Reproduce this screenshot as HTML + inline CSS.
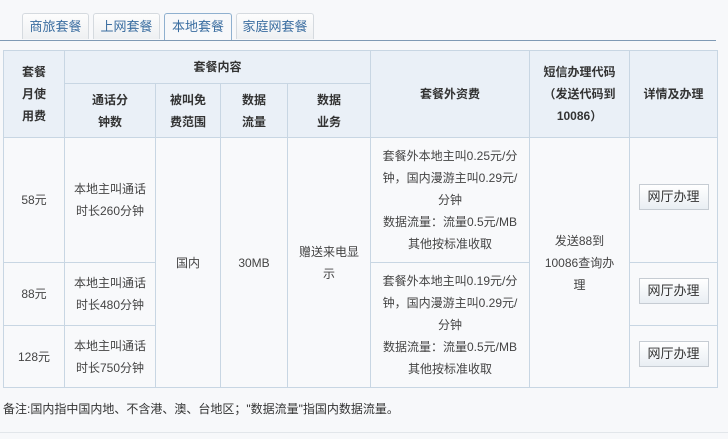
<!DOCTYPE html>
<html><head><meta charset="utf-8"><style>
body{margin:0;background:#f7f8fa;font-family:"Liberation Sans","Noto Sans CJK SC",sans-serif;font-size:12px;color:#444;width:728px;height:439px;overflow:hidden;position:relative}
.tabs{position:absolute;left:0;top:0;width:716px;height:40px;border-bottom:1px solid #7f9ab5}
.tab{position:absolute;top:13px;height:26px;line-height:26px;text-align:center;font-size:13px;color:#3a6da0;background:linear-gradient(#fdfdfd,#eef0f2);border:1px solid #d5dadf;border-bottom:none;border-radius:3px 3px 0 0;box-sizing:border-box}
.tab.on{background:#f7f8fa;border-color:#8fb0cf;height:27px}
table{position:absolute;left:3px;top:50px;border-collapse:collapse;table-layout:fixed;width:714px}
td,th{border:1px solid #c8d6e3;text-align:center;line-height:22px;padding:0 4px;font-weight:normal}
th{background:#eaf0f7;font-weight:bold;color:#333}
td{background:#f8f9fb}
.btn{display:inline-block;width:70px;height:26px;line-height:24px;border:1px solid #c6ccd3;background:linear-gradient(#fff,#e9eef3);box-sizing:border-box;color:#333;font-size:13px;position:relative;top:-3px}
.note{position:absolute;left:3px;top:399px;line-height:20px;font-size:12px;color:#333}
.bl{position:absolute;left:0;top:432px;width:728px;border-top:1px solid #e2e6ea}
</style></head><body>
<div class="tabs">
<div class="tab" style="left:22px;width:67px">商旅套餐</div>
<div class="tab" style="left:93px;width:67px">上网套餐</div>
<div class="tab on" style="left:164px;width:68px">本地套餐</div>
<div class="tab" style="left:236px;width:78px">家庭网套餐</div>
</div>
<table>
<colgroup><col style="width:61px"><col style="width:91px"><col style="width:65px"><col style="width:67px"><col style="width:83px"><col style="width:159px"><col style="width:100px"><col style="width:88px"></colgroup>
<tr style="height:33px"><th rowspan="2">套餐<br>月使<br>用费</th><th colspan="4">套餐内容</th><th rowspan="2">套餐外资费</th><th rowspan="2">短信办理代码<br>（发送代码到<br>10086）</th><th rowspan="2">详情及办理</th></tr>
<tr style="height:54px"><th>通话分<br>钟数</th><th>被叫免<br>费范围</th><th>数据<br>流量</th><th>数据<br>业务</th></tr>
<tr style="height:125px"><td>58元</td><td>本地主叫通话<br>时长260分钟</td><td rowspan="3">国内</td><td rowspan="3">30MB</td><td rowspan="3">赠送来电显<br>示</td><td>套餐外本地主叫0.25元/分<br>钟，国内漫游主叫0.29元/<br>分钟<br>数据流量：流量0.5元/MB<br>其他按标准收取</td><td rowspan="3">发送88到<br>10086查询办<br>理</td><td><span class="btn">网厅办理</span></td></tr>
<tr style="height:63px"><td>88元</td><td>本地主叫通话<br>时长480分钟</td><td rowspan="2">套餐外本地主叫0.19元/分<br>钟，国内漫游主叫0.29元/<br>分钟<br>数据流量：流量0.5元/MB<br>其他按标准收取</td><td><span class="btn">网厅办理</span></td></tr>
<tr style="height:62px"><td>128元</td><td>本地主叫通话<br>时长750分钟</td><td><span class="btn">网厅办理</span></td></tr>
</table>
<div class="note">备注:国内指中国内地、不含港、澳、台地区；"数据流量"指国内数据流量。</div>
<div class="bl"></div>
</body></html>
